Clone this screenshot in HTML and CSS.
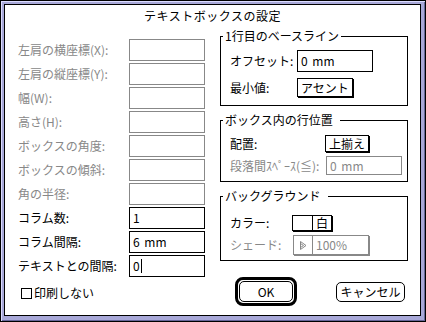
FILE: index.html
```html
<!DOCTYPE html>
<html lang="ja">
<head>
    <meta charset="UTF-8">
    <meta name="viewport" content="width=device-width, initial-scale=1.0">
    <title>テキストボックスの設定</title>
    <link rel="stylesheet" href="styles.css">
</head>
<body>
    <div class="window">
        <div class="dialog">
            <div class="title">テキストボックスの設定</div>
            <div class="body">
                <div class="left">
                    <div class="fields">
                        <span class="label off">左肩の横座標(X):</span><div class="field off"></div>
                        <span class="label off">左肩の縦座標(Y):</span><div class="field off"></div>
                        <span class="label off">幅(W):</span><div class="field off"></div>
                        <span class="label off">高さ(H):</span><div class="field off"></div>
                        <span class="label off">ボックスの角度:</span><div class="field off"></div>
                        <span class="label off">ボックスの傾斜:</span><div class="field off"></div>
                        <span class="label off">角の半径:</span><div class="field off"></div>
                        <span class="label">コラム数:</span><div class="field">1</div>
                        <span class="label">コラム間隔:</span><div class="field">6 mm</div>
                        <span class="label">テキストとの間隔:</span><div class="field">0<span class="caret"></span></div>
                    </div>
                    <div class="check"><span class="box"></span>印刷しない</div>
                </div>

                <div class="right">
                    <fieldset class="group g1">
                        <legend>1行目のベースライン</legend>
                        <div class="row">
                            <span class="lab">オフセット:</span>
                            <div class="field">0 mm</div>
                        </div>
                        <div class="row second">
                            <span class="lab">最小値:</span>
                            <div class="popup">アセント</div>
                        </div>
                    </fieldset>

                    <fieldset class="group g2">
                        <legend>ボックス内の行位置&nbsp;&nbsp;</legend>
                        <div class="row">
                            <span class="lab">配置:</span>
                            <div class="popup short">上揃え</div>
                        </div>
                        <div class="row second">
                            <span class="lab off">段落間ｽﾍﾟｰｽ(≦):</span>
                            <div class="field off small">0 mm</div>
                        </div>
                    </fieldset>

                    <fieldset class="group g3">
                        <legend>バックグラウンド&nbsp;&nbsp;</legend>
                        <div class="row">
                            <span class="lab">カラー:</span>
                            <div class="swatch">
                                <span class="cell blank"></span>
                                <span class="cell name">白</span>
                            </div>
                        </div>
                        <div class="row second">
                            <span class="lab off">シェード:</span>
                            <div class="shade">
                                <span class="cell arrow">
                                    <svg width="7" height="9" viewBox="0 0 7 9">
                                        <path d="M0.5 0.5 L6 4.5 L0.5 8.5 Z" fill="none" stroke="#888"/>
                                        <path d="M0.5 2.5 L3.5 4.5 L0.5 6.5" fill="none" stroke="#888"/>
                                    </svg>
                                </span>
                                <span class="cell pct">100%</span>
                            </div>
                        </div>
                    </fieldset>

                    <div class="buttons">
                        <button class="ok"><span>OK</span></button>
                        <button class="cancel">キャンセル</button>
                    </div>
                </div>
            </div>
        </div>
    </div>
</body>
</html>
```

FILE: styles.css
```css
* {
    box-sizing: border-box;
}

body {
    margin: 0;
    font-family: "Noto Sans CJK JP", "Liberation Sans", sans-serif;
    font-size: 12px;
    line-height: 14px;
    color: #000;
    background: #fff;
}

.window {
    width: 426px;
    height: 322px;
    border: 1px solid #000;
    padding: 3px 4px 5px 3px;
    background: #a8a8d8;
    box-shadow: inset 1px 1px 0 #dcdcff, inset -1px -1px 0 #666699;
}

.dialog {
    height: 100%;
    border: 1px solid #000;
    background: #fff;
    display: flex;
    flex-direction: column;
}

.title {
    height: 22px;
    padding-top: 4px;
    text-align: center;
    letter-spacing: 0.5px;
}

.body {
    display: flex;
}

.off {
    color: #888;
}

/* left column */
.left {
    width: 215px;
    padding: 12px 0 0 13px;
}

.fields {
    display: grid;
    grid-template-columns: 111px 76px;
    grid-auto-rows: 22px;
    row-gap: 2px;
    align-items: center;
}

.field {
    height: 22px;
    width: 76px;
    border: 1px solid #000;
    padding: 0 3px;
    display: flex;
    align-items: center;
    word-spacing: 2px;
}

.field.off {
    border-color: #888;
}

.field.small {
    height: 19px;
    margin-left: 1px;
}

.caret {
    display: inline-block;
    width: 1px;
    height: 14px;
    margin-left: 1px;
    background: #000;
}

.check {
    margin: 9px 0 0 3px;
    display: flex;
    align-items: center;
    gap: 2px;
}

.check .box {
    width: 11px;
    height: 11px;
    border: 1px solid #000;
}

/* right column */
.right {
    width: 188px;
    padding-top: 2px;
}

.group {
    margin: 0;
    min-width: 0;
    border: 1px solid #000;
    padding: 7px 0 8px 0;
}

.group legend {
    margin-left: 2px;
    padding: 0 2px;
    line-height: 14px;
}

.g2,
.g3 {
    margin-top: 7px;
}

.g2 {
    padding: 8px 0 6px 0;
}

.g3 {
    padding: 12px 0 5px 0;
}

.row {
    display: flex;
    align-items: center;
    padding-left: 9px;
}

.row.second {
    margin-top: 6px;
}

.g2 .row.second,
.g3 .row.second {
    margin-top: 4px;
}

.g1 .lab {
    width: 67px;
}

.g2 .lab {
    width: 95px;
}

.g3 .lab {
    width: 62px;
}

.popup {
    height: 19px;
    border: 1px solid #000;
    box-shadow: 1px 1px 0 #000;
    padding: 0 3px;
    display: flex;
    align-items: center;
}

.popup.short {
    height: 17px;
}

.swatch,
.shade {
    display: flex;
    border: 1px solid #000;
    box-shadow: 1px 1px 0 #000;
}

.swatch {
    height: 16px;
}

.shade {
    height: 20px;
    width: 76px;
    margin-left: 1px;
    border-color: #888;
    box-shadow: 1px 1px 0 #888;
    color: #888;
}

.cell {
    display: flex;
    align-items: center;
}

.swatch .blank {
    width: 20px;
    border-right: 1px solid #000;
}

.swatch .name {
    width: 18px;
    justify-content: center;
}

.shade .arrow {
    width: 19px;
    justify-content: center;
    border-right: 1px solid #888;
}

.shade .pct {
    padding-left: 3px;
}

.buttons {
    margin-top: 16px;
    padding-left: 15px;
    display: flex;
    align-items: center;
    gap: 39px;
}

.buttons button {
    font: inherit;
    color: #000;
    background: #fff;
    padding: 0;
    cursor: pointer;
}

.ok {
    width: 62px;
    height: 29px;
    border: 3px solid #000;
    border-radius: 8px;
    padding: 1px !important;
}

.ok span {
    display: flex;
    height: 100%;
    border: 1px solid #000;
    border-radius: 5px;
    align-items: center;
    justify-content: center;
}

.cancel {
    width: 69px;
    height: 20px;
    border: 1px solid #000;
    border-radius: 5px;
}
```
